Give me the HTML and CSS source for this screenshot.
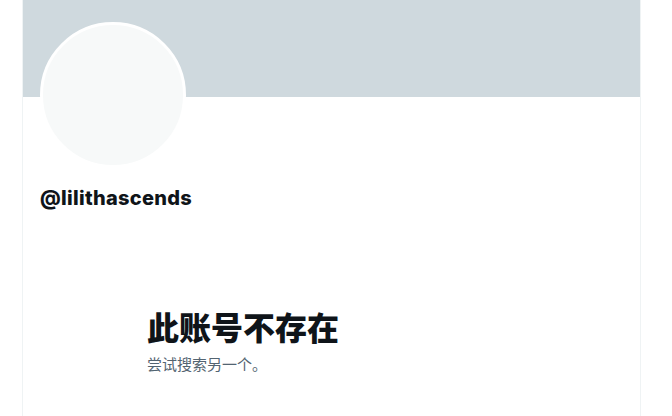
FILE: index.html
```html
<!DOCTYPE html>
<html lang="zh">

<head>
    <meta charset="UTF-8">
    <meta name="viewport" content="width=device-width, initial-scale=1.0">
    <title>@lilithascends</title>
    <link rel="stylesheet" href="styles.css">
</head>

<body>
    <main class="column">
        <!-- Banner -->
        <div class="banner"></div>

        <!-- Avatar + handle -->
        <div class="profile">
            <div class="avatar"></div>
            <div class="handle">@lilithascends</div>
        </div>

        <!-- Empty state -->
        <div class="empty">
            <h2>此账号不存在</h2>
            <p>尝试搜索另一个。</p>
        </div>
    </main>
</body>

</html>
```

FILE: styles.css
```css
body {
    margin: 0;
    background-color: #ffffff;
    font-family: Inter, "Noto Sans CJK SC", sans-serif;
    color: #0f1419;
}

.column {
    margin-left: 22px;
    width: 617px;
    min-height: 416px;
    border-left: 1px solid #eff3f4;
    border-right: 1px solid #eff3f4;
}

.banner {
    height: 97px;
    background-color: #cfd9de;
}

.profile {
    padding: 0 17px;
}

.avatar {
    width: 140px;
    height: 140px;
    margin-top: -75px;
    border: 3px solid #ffffff;
    border-radius: 50%;
    background-color: #f7f9f9;
}

.handle {
    margin-top: 18px;
    font-size: 20px;
    font-weight: 800;
    letter-spacing: 0.3px;
    line-height: 24px;
}

.empty {
    padding: 98px 0 0 124px;
}

.empty h2 {
    margin: 0;
    font-family: "Noto Sans CJK SC", sans-serif;
    font-size: 32px;
    font-weight: 900;
    line-height: 36px;
}

.empty p {
    margin: 10px 0 0;
    font-family: "Noto Sans CJK SC", sans-serif;
    font-size: 15px;
    line-height: 20px;
    color: #536471;
}
```
